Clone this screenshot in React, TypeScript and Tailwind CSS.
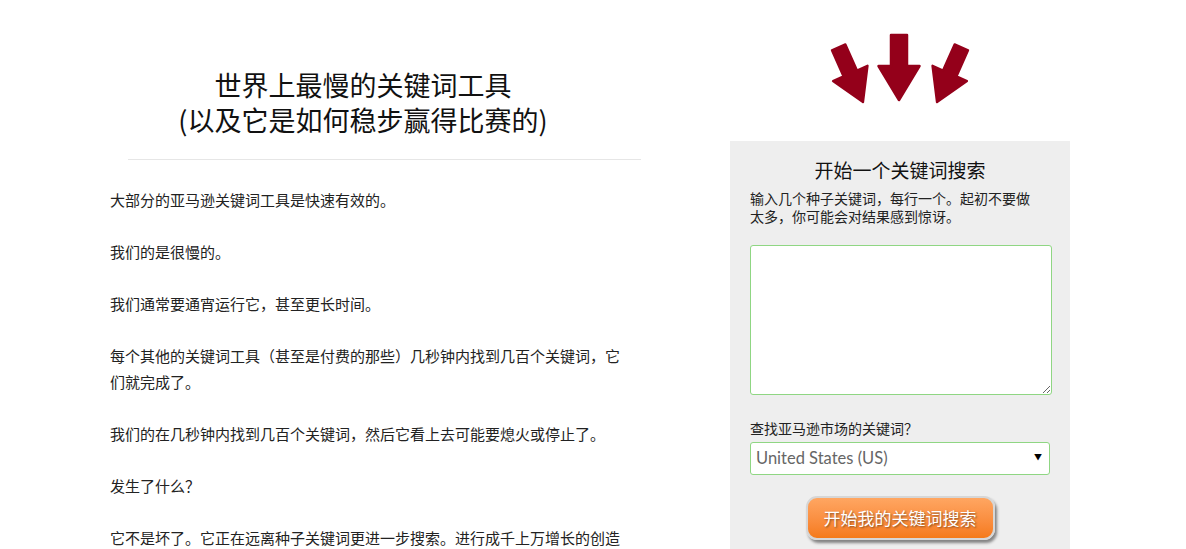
import React from "react";

const paragraphs = [
  "大部分的亚马逊关键词工具是快速有效的。",
  "我们的是很慢的。",
  "我们通常要通宵运行它，甚至更长时间。",
  "每个其他的关键词工具（甚至是付费的那些）几秒钟内找到几百个关键词，它们就完成了。",
  "我们的在几秒钟内找到几百个关键词，然后它看上去可能要熄火或停止了。",
  "发生了什么？",
  "它不是坏了。它正在远离种子关键词更进一步搜索。进行成千上万增长的创造性搜索。",
];

const cjk = { fontFamily: '"Noto Sans CJK SC", "Noto Sans", sans-serif' };

// one downward arrow, tip at 0,0
const arrow = "M-8,-65 L8,-65 L8,-34 L20.5,-34 L0,0 L-20.5,-34 L-8,-34 Z";

function Arrows() {
  return (
    <svg width="140" height="75" viewBox="830 32 140 75" className="mx-auto block">
      <g fill="#94001a" stroke="#94001a" strokeWidth="2.5" strokeLinejoin="round">
        <path d={arrow} transform="translate(863 102) rotate(-24) scale(0.92)" />
        <path d={arrow} transform="translate(899 100)" />
        <path d={arrow} transform="translate(937 102) rotate(24) scale(0.92)" />
      </g>
    </svg>
  );
}

function SearchPanel() {
  return (
    <div className="mt-[34px] bg-[#eeeeee] px-5 pt-[17px] pb-6 text-[#222]">
      <h2 className="text-center text-[19px] leading-[24px] text-[#111]">开始一个关键词搜索</h2>
      <p className="mt-[7px] w-[290px] text-[14px] leading-[18px] text-[#222]">
        输入几个种子关键词，每行一个。起初不要做太多，你可能会对结果感到惊讶。
      </p>
      <textarea className="mt-[20px] block h-[150px] w-[302px] rounded-[3px] border border-[#8fd683] bg-white p-2 text-sm outline-none" />
      <div className="mt-[23px] text-[14px] leading-[20px] text-[#222]">查找亚马逊市场的关键词？</div>
      <div className="relative mt-[4px] w-[300px]">
        <select
          defaultValue="US"
          className="block h-[33px] w-full appearance-none rounded-[3px] border border-[#8fd683] bg-white pl-[5px] text-[16.5px] text-[#666] outline-none"
          style={{ fontFamily: 'Lato, "Open Sans", sans-serif' }}
        >
          <option value="US">United States (US)</option>
          <option value="UK">United Kingdom (UK)</option>
          <option value="DE">Germany (DE)</option>
        </select>
        <span className="pointer-events-none absolute right-[8px] top-[10px] text-[8px] leading-[10px] text-black">▼</span>
      </div>
      <div className="mt-[21px] flex justify-center">
        <button
          className="h-[44px] w-[189px] rounded-[11px] border-2 border-[#d6d6d6] bg-gradient-to-b from-[#ffa661] to-[#f57a18] text-[17px] text-white shadow-[2px_3px_3px_rgba(0,0,0,0.45)] [text-shadow:1px_1px_2px_rgba(0,0,0,0.45)]"
        >
          开始我的关键词搜索
        </button>
      </div>
    </div>
  );
}

export default function App() {
  return (
    <div className="h-[549px] overflow-hidden bg-white" style={cjk}>
      <div className="flex">
        <div className="ml-[110px] w-[520px] pt-[67px] text-[#222]">
          <h1 className="pr-[14px] text-center text-[27px] font-normal leading-[35px] text-[#111]">
            世界上最慢的关键词工具
            <br />
            (以及它是如何稳步赢得比赛的)
          </h1>
          <div className="ml-[18px] mt-[22px] h-px w-[513px] bg-[#e6e6e6]" />
          <div className="mt-[27px]">
            {paragraphs.map((p, i) => (
              <p key={i} className="mb-[26px] text-[15px] leading-[26px]">
                {p}
              </p>
            ))}
          </div>
        </div>
        <div className="ml-[100px] w-[340px] pt-[32px]">
          <Arrows />
          <SearchPanel />
        </div>
      </div>
    </div>
  );
}
